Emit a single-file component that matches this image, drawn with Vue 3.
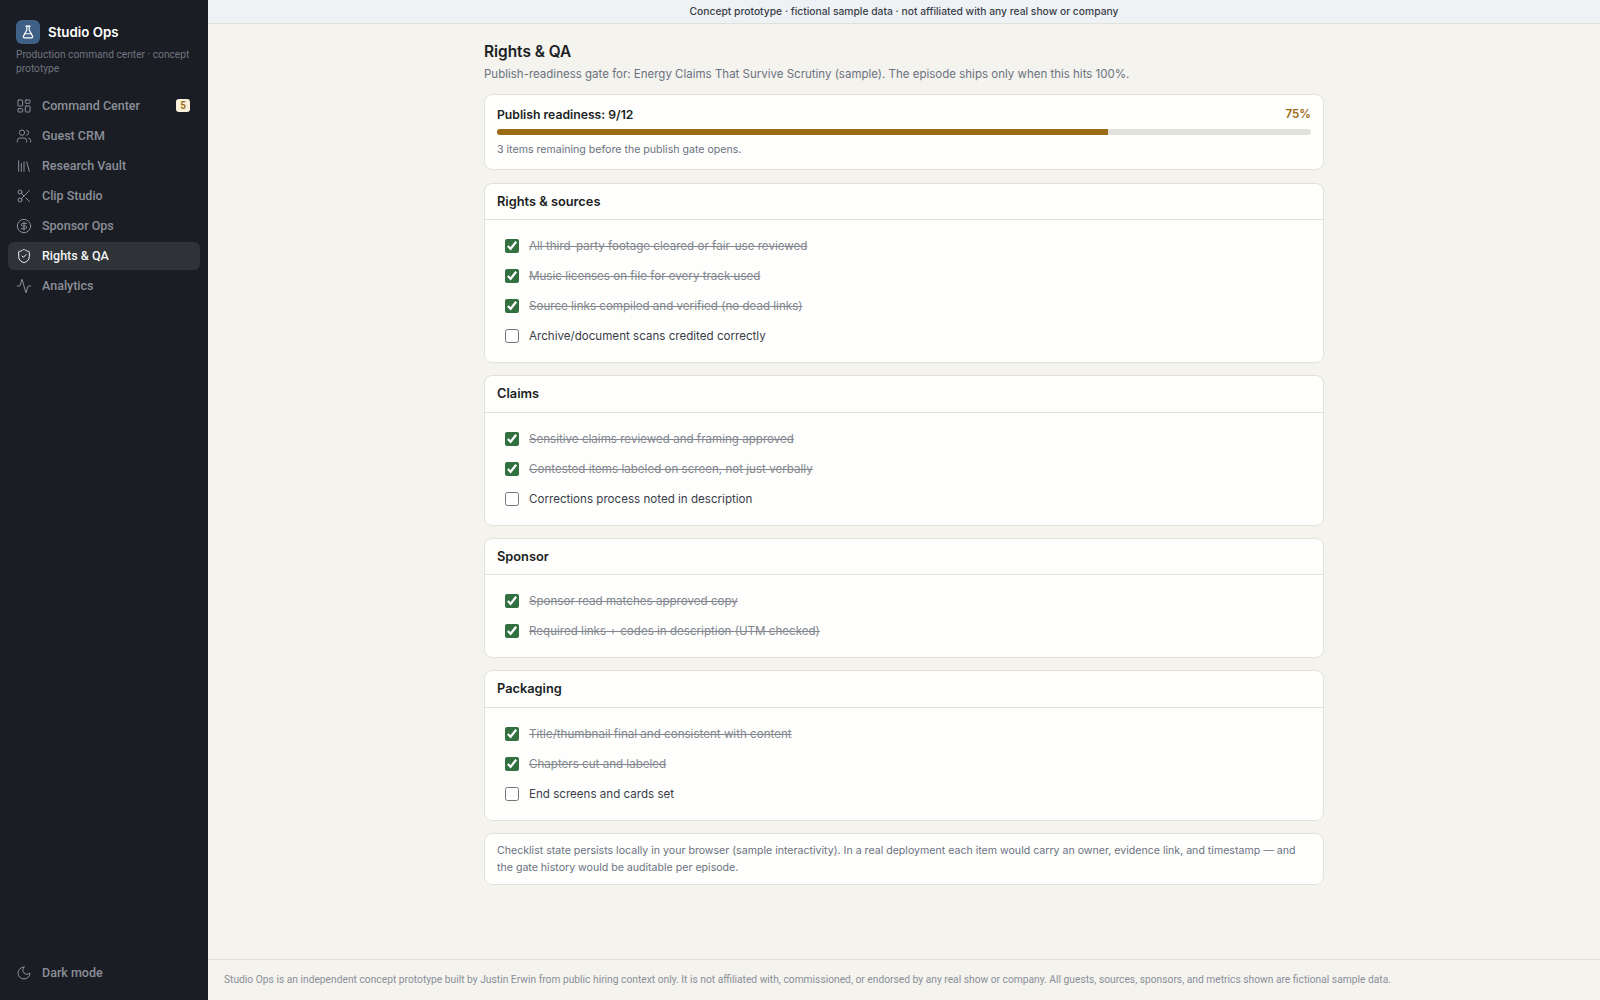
<template>
  <div class="app">
    <aside class="sidebar">
      <div class="brand">
        <div class="brand-row">
          <span class="brand-logo">
            <svg viewBox="0 0 24 24" class="brand-icon"><path d="M14 2v6a2 2 0 0 0 .245.96l5.51 10.08A2 2 0 0 1 18 22H6a2 2 0 0 1-1.755-2.96l5.51-10.08A2 2 0 0 0 10 8V2" /><path d="M6.453 15h11.094" /><path d="M8.5 2h7" /></svg>
          </span>
          <span class="brand-name">Studio Ops</span>
        </div>
        <p class="brand-sub">Production command center · concept prototype</p>
      </div>
      <nav class="nav">
        <a v-for="item in navItems" :key="item.label" class="nav-item" :class="{ active: item.active }">
          <svg viewBox="0 0 24 24" class="nav-icon" v-html="item.icon" />
          <span class="nav-label">{{ item.label }}</span>
          <span v-if="item.badge" class="nav-badge">{{ item.badge }}</span>
        </a>
      </nav>
      <a class="nav-item">
        <svg viewBox="0 0 24 24" class="nav-icon"><path d="M12 3a6 6 0 0 0 9 9 9 9 0 1 1-9-9Z" /></svg>
        <span class="nav-label">Dark mode</span>
      </a>
    </aside>

    <div class="main">
      <div class="banner">Concept prototype · fictional sample data · not affiliated with any real show or company</div>
      <main class="content">
        <div class="page">
          <h1 class="title">Rights &amp; QA</h1>
          <p class="subtitle">Publish-readiness gate for: Energy Claims That Survive Scrutiny (sample). The episode ships only when this hits 100%.</p>

          <section class="card progress-card">
            <div class="progress-head">
              <span class="progress-title">Publish readiness: {{ doneCount }}/{{ totalCount }}</span>
              <span class="progress-pct">{{ percent }}%</span>
            </div>
            <div class="track"><div class="fill" :style="{ width: percent + '%' }" /></div>
            <p class="progress-note">{{ totalCount - doneCount }} items remaining before the publish gate opens.</p>
          </section>

          <section v-for="group in groups" :key="group.title" class="card">
            <h2 class="card-head">{{ group.title }}</h2>
            <div class="card-body">
              <label v-for="check in group.items" :key="check.text" class="check-row">
                <input v-model="check.done" type="checkbox" class="check-box" />
                <span class="check-text" :class="{ done: check.done }">{{ check.text }}</span>
              </label>
            </div>
          </section>

          <section class="card note-card">
            Checklist state persists locally in your browser (sample interactivity). In a real deployment each item would carry an owner, evidence link, and timestamp — and the gate history would be auditable per episode.
          </section>
        </div>
      </main>
      <footer class="footer">Studio Ops is an independent concept prototype built by Justin Erwin from public hiring context only. It is not affiliated with, commissioned, or endorsed by any real show or company. All guests, sources, sponsors, and metrics shown are fictional sample data.</footer>
    </div>
  </div>
</template>

<script setup>
import { computed, reactive } from 'vue'

const navItems = [
  { label: 'Command Center', badge: '5', icon: '<rect x="3" y="3" width="7" height="9" rx="1"/><rect x="14" y="3" width="7" height="5" rx="1"/><rect x="14" y="12" width="7" height="9" rx="1"/><rect x="3" y="16" width="7" height="5" rx="1"/>' },
  { label: 'Guest CRM', icon: '<path d="M16 21v-2a4 4 0 0 0-4-4H6a4 4 0 0 0-4 4v2"/><circle cx="9" cy="7" r="4"/><path d="M22 21v-2a4 4 0 0 0-3-3.87"/><path d="M16 3.13a4 4 0 0 1 0 7.75"/>' },
  { label: 'Research Vault', icon: '<path d="m16 6 4 14"/><path d="M12 6v14"/><path d="M8 8v12"/><path d="M4 4v16"/>' },
  { label: 'Clip Studio', icon: '<circle cx="6" cy="6" r="3"/><path d="M8.12 8.12 12 12"/><path d="M20 4 8.12 15.88"/><circle cx="6" cy="18" r="3"/><path d="M14.8 14.8 20 20"/>' },
  { label: 'Sponsor Ops', icon: '<circle cx="12" cy="12" r="10"/><path d="M16 8h-6a2 2 0 1 0 0 4h4a2 2 0 1 1 0 4H8"/><path d="M12 18V6"/>' },
  { label: 'Rights & QA', active: true, icon: '<path d="M20 13c0 5-3.5 7.5-7.66 8.95a1 1 0 0 1-.67-.01C7.5 20.5 4 18 4 13V6a1 1 0 0 1 1-1c2 0 4.5-1.2 6.24-2.72a1.17 1.17 0 0 1 1.52 0C14.51 3.81 17 5 19 5a1 1 0 0 1 1 1z"/><path d="m9 12 2 2 4-4"/>' },
  { label: 'Analytics', icon: '<path d="M22 12h-2.48a2 2 0 0 0-1.93 1.46l-2.35 8.36a.25.25 0 0 1-.48 0L9.24 2.18a.25.25 0 0 0-.48 0l-2.35 8.36A2 2 0 0 1 4.49 12H2"/>' },
]

const groups = reactive([
  {
    title: 'Rights & sources',
    items: [
      { text: 'All third-party footage cleared or fair-use reviewed', done: true },
      { text: 'Music licenses on file for every track used', done: true },
      { text: 'Source links compiled and verified (no dead links)', done: true },
      { text: 'Archive/document scans credited correctly', done: false },
    ],
  },
  {
    title: 'Claims',
    items: [
      { text: 'Sensitive claims reviewed and framing approved', done: true },
      { text: 'Contested items labeled on screen, not just verbally', done: true },
      { text: 'Corrections process noted in description', done: false },
    ],
  },
  {
    title: 'Sponsor',
    items: [
      { text: 'Sponsor read matches approved copy', done: true },
      { text: 'Required links + codes in description (UTM checked)', done: true },
    ],
  },
  {
    title: 'Packaging',
    items: [
      { text: 'Title/thumbnail final and consistent with content', done: true },
      { text: 'Chapters cut and labeled', done: true },
      { text: 'End screens and cards set', done: false },
    ],
  },
])

const allItems = computed(() => groups.flatMap((g) => g.items))
const totalCount = computed(() => allItems.value.length)
const doneCount = computed(() => allItems.value.filter((i) => i.done).length)
const percent = computed(() => Math.round((doneCount.value / totalCount.value) * 100))
</script>

<style>
html,
body {
  margin: 0;
  height: 100%;
}
</style>

<style scoped>
.app {
  display: flex;
  height: 1000px;
  overflow: hidden;
  font-family: Inter, "Liberation Sans", sans-serif;
  background: #f4f3ee;
  color: #1b1e23;
}

.sidebar {
  flex: 0 0 208px;
  box-sizing: border-box;
  display: flex;
  flex-direction: column;
  padding: 0 8px 13px;
  background: #1a1d23;
  font-family: Roboto, "Liberation Sans", sans-serif;
}

.brand {
  padding: 20px 8px 16px;
}

.brand-row {
  display: flex;
  align-items: center;
  gap: 8px;
}

.brand-logo {
  display: flex;
  align-items: center;
  justify-content: center;
  width: 24px;
  height: 24px;
  border-radius: 6px;
  background: #3f6186;
}

.brand-icon {
  width: 14px;
  height: 14px;
  fill: none;
  stroke: #fff;
  stroke-width: 2;
  stroke-linecap: round;
  stroke-linejoin: round;
}

.brand-name {
  font-family: Inter, sans-serif;
  font-size: 13.3px;
  font-weight: 600;
  color: #fff;
}

.brand-sub {
  margin: 4px 0 0;
  font-size: 10.2px;
  line-height: 14px;
  color: #6f7480;
}

.nav {
  flex: 1;
  display: flex;
  flex-direction: column;
  gap: 2px;
}

.nav-item {
  display: flex;
  align-items: center;
  gap: 10px;
  box-sizing: border-box;
  height: 28px;
  padding: 0 8px 1px;
  border-radius: 6px;
  font-size: 12.5px;
  font-weight: 500;
  color: #8b8f99;
}

.nav-item.active {
  background: #2f3338;
  color: #f4f5f6;
}

.nav-icon {
  flex: 0 0 16px;
  width: 16px;
  height: 16px;
  fill: none;
  stroke: currentColor;
  stroke-width: 1.5;
  stroke-linecap: round;
  stroke-linejoin: round;
}

.nav-label {
  flex: 1;
}

.nav-badge {
  margin-right: 2px;
  padding: 0 4px;
  border-radius: 3px;
  background: #fbf0dc;
  color: #9a6b14;
  font-size: 10px;
  font-weight: 600;
  line-height: 13px;
}

.main {
  flex: 1;
  min-width: 0;
  display: flex;
  flex-direction: column;
}

.banner {
  flex: 0 0 24px;
  box-sizing: border-box;
  border-bottom: 1px solid #e2e1da;
  background: #eef2f5;
  color: #3a404a;
  font-size: 10.3px;
  font-weight: 500;
  line-height: 23px;
  text-align: center;
}

.content {
  flex: 1;
  min-height: 0;
  padding: 18px 0 0;
}

.page {
  display: flex;
  flex-direction: column;
  gap: 12.2px;
  width: 840px;
  margin: 0 auto;
}

.title {
  margin: 0 0 -8.2px;
  font-size: 15.4px;
  font-weight: 600;
  line-height: 20px;
}

.subtitle {
  margin: 0 0 -1.2px;
  font-size: 11.5px;
  line-height: 17px;
  color: #6b7280;
}

.card {
  box-sizing: border-box;
  border: 1px solid #e3e2da;
  border-radius: 8px;
  background: #fefefc;
}

.progress-card {
  padding: 12px 12px 12.4px;
}

.progress-head {
  display: flex;
  align-items: center;
  justify-content: space-between;
  font-size: 12.2px;
  font-weight: 600;
  line-height: 15px;
}

.progress-pct {
  font-size: 11.6px;
  color: #9a6b14;
}

.track {
  height: 6px;
  margin-top: 7px;
  overflow: hidden;
  border-radius: 3px;
  background: #e3e2da;
}

.fill {
  height: 100%;
  background: #9a6b14;
}

.progress-note {
  margin: 8px 0 0;
  font-size: 10.6px;
  line-height: 14px;
  color: #6b7280;
}

.card-head {
  margin: 0;
  padding: 10px 12px;
  border-bottom: 1px solid #e3e2da;
  font-size: 12.8px;
  font-weight: 600;
  line-height: 15.4px;
}

.card-body {
  display: flex;
  flex-direction: column;
  padding: 11px 12px;
}

.check-row {
  display: flex;
  align-items: center;
  gap: 10px;
  height: 30px;
  padding: 0 8px;
  font-size: 11.6px;
  color: #3a404a;
}

.check-box {
  flex: 0 0 14px;
  width: 14px;
  height: 14px;
  margin: 0;
  accent-color: #33703f;
}

.check-text.done {
  color: #83878f;
  text-decoration: line-through;
}

.note-card {
  padding: 8px 12px;
  font-size: 10.6px;
  line-height: 17px;
  color: #6b7280;
}

.footer {
  flex: 0 0 41px;
  box-sizing: border-box;
  padding: 12px 16px;
  border-top: 1px solid #e3e2da;
  font-family: Roboto, "Liberation Sans", sans-serif;
  font-size: 10.25px;
  line-height: 16px;
  color: #8b8f99;
  white-space: nowrap;
  overflow: hidden;
}
</style>
